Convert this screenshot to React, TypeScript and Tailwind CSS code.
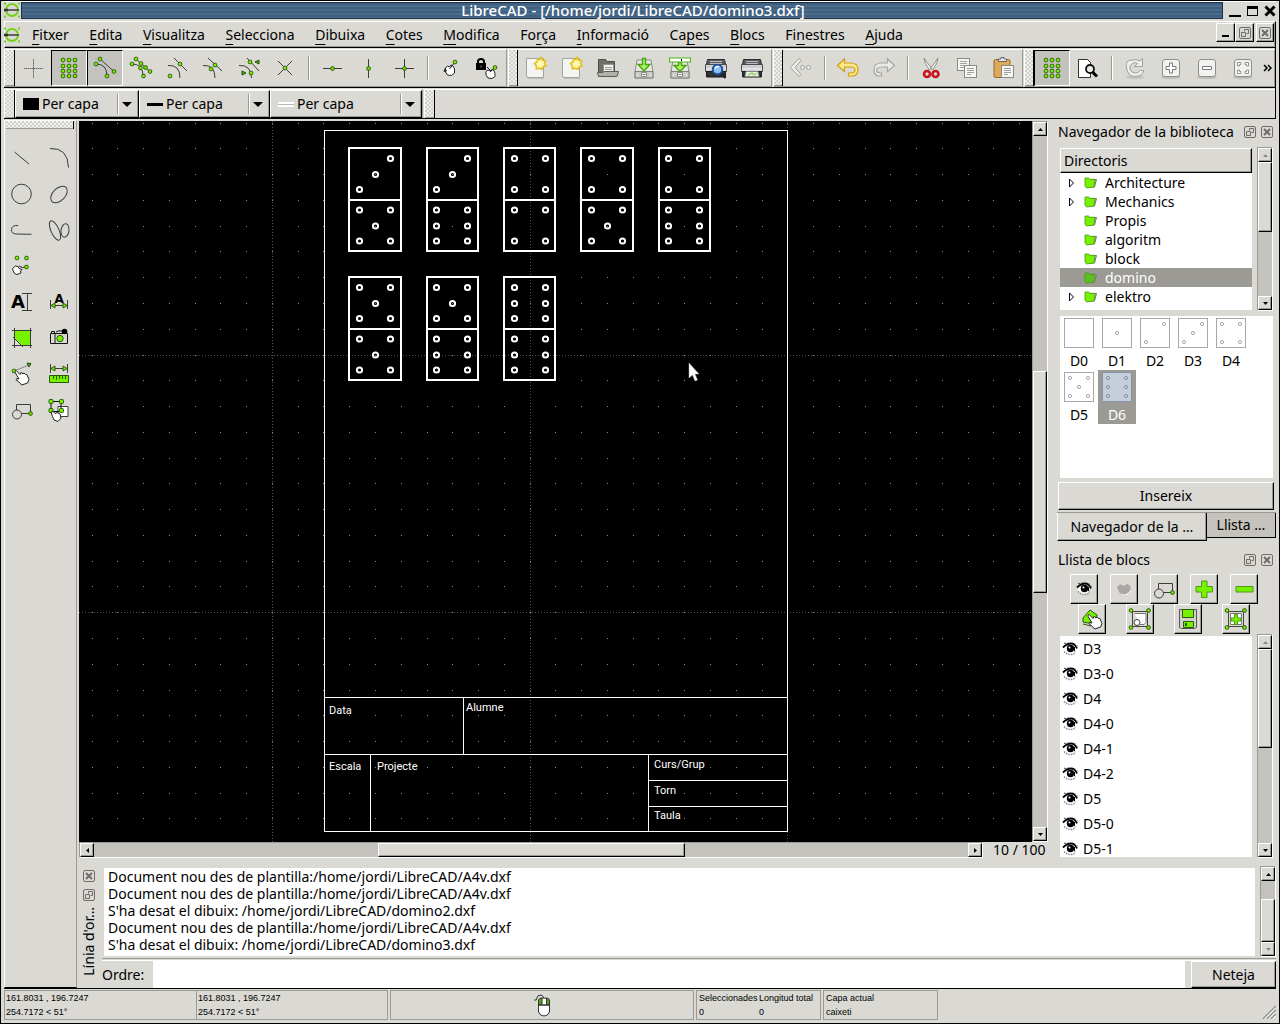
import React from "react";

const RAISED =
  "border border-t-white border-l-white border-r-black border-b-black bg-[#dad9d4] shadow-[inset_-1px_-1px_0_#9b9a94]";

type Pt = [number, number];

/* ---------- icon primitives ---------- */

function Icon({ children, size = 24 }: { children: React.ReactNode; size?: number }) {
  return (
    <svg
      width={size}
      height={size}
      viewBox={`0 0 ${size} ${size}`}
      fill="none"
      stroke="#3c3c3a"
      strokeWidth="1"
      className="block shrink-0"
      aria-hidden="true"
    >
      {children}
    </svg>
  );
}

function Dots({ at, r = 1.7 }: { at: Pt[]; r?: number }) {
  return (
    <g fill="#76f200" stroke="#2d5a08">
      {at.map(([x, y], i) => (
        <rect key={i} x={x - r} y={y - r} width={r * 2} height={r * 2} rx="1" />
      ))}
    </g>
  );
}

function Hand({ x = 0, y = 0 }: { x?: number; y?: number }) {
  return (
    <path
      transform={`translate(${x} ${y})`}
      d="M1 1.200 2.400.600 6 4.600 6.600 2.800 8 2.600 8.800 4 10 3 11.400 4.400 12.800 4.400 15 9.400 13.600 13 7.600 15 5.600 12.600 2 9.800 2.600 8.600 5 9 1.200 2.600Z"
      fill="#fff"
      stroke="#222"
    />
  );
}

const GRID: Pt[] = [];
for (const x of [6, 12, 18]) for (const y of [4, 10, 15, 20]) GRID.push([x, y]);

const GridIcon = () => (
  <Icon>
    <Dots at={GRID} />
  </Icon>
);

const Drive = () => (
  <g>
    <path d="M5 4h14l2 12v6H3v-6Z" fill="#e6e6e2" stroke="#8c8c88" />
    <path d="M3 15.500h18v6.500H3Z" fill="#c9c9c5" stroke="#80807c" />
    <path d="M9.500 16.500h5v4h-5z" fill="#fff" stroke="#888" />
    <path d="M10.500 18.500h3" stroke="#666" />
    <path d="M5.500 18v2M18.500 18v2" stroke="#eee" />
  </g>
);

const Printer = () => (
  <g>
    <path d="M3.500 3.500h17l1 5H2.500Z" fill="#5a5c5e" stroke="#2a2c2e" />
    <path d="M6 5.500h12M6 7.500h12" stroke="#b8babc" />
    <path d="M1.500 8.500h21v7h-21Z" fill="#cfd1d1" stroke="#4a4c4e" />
    <path d="M2.500 15.500h19v5.500h-19Z" fill="#2f3133" stroke="#1c1d1e" />
    <path d="M2 13h20" stroke="#f4f4f4" />
  </g>
);

const Paper = ({ x, y }: { x: number; y: number }) => (
  <g transform={`translate(${x} ${y})`}>
    <rect x=".5" y=".5" width="12" height="12" fill="#f6f6f4" stroke="#8a8a86" />
    <path d="M3 3.500h7M3 5.500h7M3 7.500h7M3 9.500h4" stroke="#a0a09c" />
  </g>
);

const ZoomPad = ({ children }: { children: React.ReactNode }) => (
  <Icon>
    <ellipse cx="12" cy="21" rx="10" ry="2" fill="#bdbcb7" stroke="none" />
    <rect x="3.500" y="3.500" width="17" height="17" rx="2.500" fill="#f2f2f0" stroke="#8e8e8a" />
    {children}
  </Icon>
);

const NewDoc = () => (
  <Icon>
    <path d="M2.500 2.500h17v19h-15q-2 0-2-2Z" fill="#f4f4f2" stroke="#a2a29e" />
    <path d="M4 22.500h16" stroke="#c0bfba" />
    <path
      d="m17 1.500 1.500 2.700 3 .5-1 2.800 1.500 2.500-2.800.800-1.400 2.400-2.600-1-2.800.500-.100-2.900-1.800-2.300 2.500-1.500.700-2.800 2.500.3Z"
      fill="#fff8b4"
      stroke="#e6c01e"
      strokeWidth="1.600"
    />
  </Icon>
);

const Eye = ({ dim = false }: { dim?: boolean }) => (
  <svg width="16" height="14" viewBox="0 0 16 14" fill="none" className="block shrink-0" aria-hidden="true">
    {dim ? (
      <>
        <path d="M2 10q3 3 7 3t6-4V6l-1 3-4 3H5Z" fill="#fff" />
        <path d="M1 5 4 2.500 6 3l2 1 3-2 3 1.500 1 3-2 4-4 2-5-1L2 8Z" fill="#a9a8a4" />
      </>
    ) : (
      <g>
        <path d="M1 8.500 4 5l5-2 5 3-1 4-4 2.500-5-1Z" fill="#fff" />
        <path d="M1 5.500Q5 1.500 9 1.500t6 5" stroke="#000" strokeWidth="1.800" />
        <path d="M4 2 2 1M7 1.500 6 .5M12 2.500 13 1.500M14 5l1.500-1" stroke="#333" />
        <path d="M2 9.500Q5 12.500 9 12.500t4-3" stroke="#8a8a8a" strokeWidth="1.500" strokeDasharray="1.500 1" />
        <circle cx="8.500" cy="6.500" r="3.700" fill="#000" />
        <circle cx="7.500" cy="5.500" r="1" fill="#fff" />
        <path d="M12.500 5v4" stroke="#000" />
      </g>
    )}
  </svg>
);

const Folder = ({ dark = false }: { dark?: boolean }) => (
  <svg width="14" height="12" viewBox="0 0 14 12" className="block shrink-0" aria-hidden="true">
    <path d="M4 2.500h8.500l-2 7.500H4Z" fill="#b9b8c4" stroke="#77767c" />
    <path d="M1 1h3.500l1.500 1.300h5l-1 7.700-7.500 1L1 9Z" fill={dark ? "#5bc022" : "#76f200"} stroke="#4a9a10" strokeWidth=".8" />
  </svg>
);

const BlockShape = () => (
  <>
    <path d="M6.500 12V6.500h14v9H11" />
    <circle cx="7" cy="16.500" r="4.500" />
    <Dots at={[[20.5, 15.5]]} />
  </>
);

const Logo = () => (
  <svg width="16" height="16" viewBox="0 0 16 16" fill="none" className="block shrink-0" aria-hidden="true">
    <path d="M0 1.500h2M14 1.500h2M0 14.500h2M14 14.500h2" stroke="#74d216" strokeWidth="2" />
    <circle cx="8" cy="8" r="6" stroke="#74d216" strokeWidth="1.800" />
    <path d="M0 8h15" stroke="#444" strokeWidth="1.600" />
    <path d="M0 8h4" stroke="#333" strokeWidth="2.600" />
  </svg>
);

/* ---------- tool definitions ---------- */

type Tool = { label: string; icon: React.ReactNode; pressed?: boolean } | "sep";

const SNAP: Tool[] = [
  { label: "Captura lliure", icon: <Icon><path d="M3 12.500h19M12.500 3v19" stroke="#666" strokeDasharray="1.500 .5" /></Icon> },
  { label: "Captura a la graella", pressed: true, icon: <GridIcon /> },
  {
    label: "Captura als extrems",
    pressed: true,
    icon: <Icon><path d="M7 3 21 15.500M3 8q11 0 11 12" /><Dots at={[[7, 3], [3, 8], [14, 20], [21, 15.5]]} /></Icon>,
  },
  {
    label: "Captura a l'entitat",
    icon: <Icon><path d="M7 3 21 15.500M3 8q11 0 11 12" /><Dots at={[[7, 3], [3, 8], [12, 7.5], [11.5, 12], [16.5, 11.5], [21, 15.5], [14.5, 20]]} /></Icon>,
  },
  { label: "Captura al centre", icon: <Icon><path d="M9 2 22 15M3 9.500q12-1 12 12.500" /><Dots at={[[15, 8], [5, 20]]} /></Icon> },
  { label: "Captura al punt mig", icon: <Icon><path d="M7 2 21 15M2 9.500q12-1 12 12.500" /><Dots at={[[14, 9], [10, 13]]} /></Icon> },
  {
    label: "Captura a distància",
    icon: (
      <Icon>
        <path d="M10 2 22 15M2 9.500q12-1 12.500 12.500" />
        <path d="M22 4v4l-4-2ZM5 15v4l4-2Z" fill="#4fae0c" stroke="#22500a" />
        <Dots at={[[13, 6], [14, 17]]} />
      </Icon>
    ),
  },
  { label: "Captura a la intersecció", icon: <Icon><path d="m5 5 14 14M19 5 5 19" /><Dots at={[[12, 12]]} /></Icon> },
  "sep",
  { label: "Restringeix horitzontal", icon: <Icon><path d="M3 12.500h19" /><Dots at={[[12.5, 12.5]]} /></Icon> },
  { label: "Restringeix vertical", icon: <Icon><path d="M12.500 3v19" /><Dots at={[[12.5, 12.5]]} /></Icon> },
  { label: "Restringeix ortogonal", icon: <Icon><path d="M3 12.500h19M12.500 3v19" /><Dots at={[[12.5, 12.5]]} /></Icon> },
  "sep",
  {
    label: "Estableix el zero relatiu",
    icon: (
      <Icon>
        <path d="m6.500 12 2-2 2 1 1.500-2 2 1 1.500 3v4l-3 2.500-4-.5-2-3Z" fill="#fff" stroke="#222" />
        <path d="m10.500 13 5.500-7M6 12.500l-1 3 3-1" stroke="#222" />
        <Dots at={[[16, 6]]} />
      </Icon>
    ),
  },
  {
    label: "Bloca el zero relatiu",
    icon: (
      <Icon>
        <path d="M3 8V5.500Q3 3 6 3t3 2.500V8" stroke="#000" strokeWidth="2" />
        <rect x="1" y="7" width="10" height="7" fill="#000" stroke="none" />
        <path d="M6 9.500v2" stroke="#888" />
        <path d="m11 15.500 2-1.500 2 1 2-1.500 2 1 1 3v3L17 22.500l-4-.5-2-3Z" fill="#fff" stroke="#222" />
        <path d="m12 11 4 4M15 16l4.500-4" stroke="#222" />
        <Dots at={[[20, 11.5]]} />
      </Icon>
    ),
  },
];

const FILES: Tool[] = [
  { label: "Nou", icon: <NewDoc /> },
  { label: "Nou des de plantilla", icon: <NewDoc /> },
  {
    label: "Obre",
    icon: (
      <Icon>
        <path d="M2.500 3.500h7l2 2h7v14h-16Z" fill="#6f7068" stroke="#4c4d47" />
        <path d="M7.500 8.500h10v9h-10Z" fill="#f2f2f0" stroke="#96968f" />
        <path d="M9 11.500h7M9 13.500h7" stroke="#999" />
        <path d="M2.500 20.500 1.500 16.500h5l2-1h14l-1.500 5Z" fill="#b0b1a8" stroke="#5c5d57" />
      </Icon>
    ),
  },
  {
    label: "Desa",
    icon: <Icon><Drive /><path d="M10.500 2.500h3v6H18l-6 6.500-6-6.500h4.500Z" fill="#aaf06a" stroke="#45a50a" strokeWidth="1.300" /></Icon>,
  },
  {
    label: "Anomena i desa",
    icon: (
      <Icon>
        <Drive />
        <path d="M10.500 6.500h3v3H18l-6 6-6-6h4.500Z" fill="#aaf06a" stroke="#45a50a" strokeWidth="1.300" />
        <rect x="1.500" y="2" width="21" height="4" fill="#fff" stroke="#4fb50e" />
        <path d="M13.500 3v2" stroke="#000" />
      </Icon>
    ),
  },
  {
    label: "Previsualització d'impressió",
    icon: (
      <Icon>
        <Printer />
        <path d="m17 17 4.500 5" stroke="#222" strokeWidth="2.500" />
        <circle cx="13.500" cy="13.500" r="4.800" fill="#8ec0f4" stroke="#1d4f9c" strokeWidth="2" />
        <path d="M11 12q1.500-2 4-1.500" stroke="#fff" strokeWidth="1.500" />
      </Icon>
    ),
  },
  {
    label: "Imprimeix",
    icon: (
      <Icon>
        <Printer />
        <path d="M6 15.500h12l1 5H5Z" fill="#f4f6f2" stroke="#888" />
        <path d="m8 19 4-2 2 2 3-2" stroke="#8fd45e" strokeWidth="1.500" />
      </Icon>
    ),
  },
];

const EDIT: Tool[] = [
  {
    label: "Tanca",
    icon: (
      <Icon>
        <path d="m12 4.500-2-2L1.500 11.500l8.500 9 2-2-6-7Z" fill="#eeeeea" stroke="#9e9e9a" />
        <circle cx="13.500" cy="11.500" r="2" fill="#eee" stroke="#9e9e9a" />
        <circle cx="19.500" cy="11.500" r="2" fill="#eee" stroke="#9e9e9a" />
      </Icon>
    ),
  },
  "sep",
  {
    label: "Desfés",
    icon: <Icon><path d="m1.500 9.500 7-6.500v4h6q7.500 0 7.500 6.500T15.500 20h-3v-3h2q4.500 0 4.500-3t-4.500-3h-6v4.500Z" fill="#fbe98a" stroke="#cfa010" strokeWidth="1.200" /></Icon>,
  },
  {
    label: "Refés",
    icon: <Icon><path d="m22.500 9.500-7-6.500v4h-6Q2 7 2 13.500T7.500 20h2v-3H8q-3.500-.5-3.500-3T9.500 11h6v4.500Z" fill="#e9e9e5" stroke="#a6a6a2" strokeWidth="1.200" /></Icon>,
  },
  "sep",
  {
    label: "Retalla",
    icon: (
      <Icon>
        <path d="M5 2q0 5 5.500 12l2-2Q8 7 5 2ZM19 2q0 5-5.500 12l-2-2Q16 7 19 2Z" fill="#f4f4f2" stroke="#8c8c88" />
        <circle cx="8" cy="18" r="3" stroke="#c8141c" strokeWidth="2.600" />
        <circle cx="16.500" cy="18" r="3" stroke="#c8141c" strokeWidth="2.600" />
      </Icon>
    ),
  },
  { label: "Copia", icon: <Icon><Paper x={2} y={2} /><Paper x={9} y={9} /></Icon> },
  {
    label: "Enganxa",
    icon: (
      <Icon>
        <rect x="3" y="3.500" width="16" height="18" rx="1.500" fill="#e0a858" stroke="#96682a" />
        <path d="M7.500 5.500V3h2.500V1.500h3V3h2.500v2.500Z" fill="#e8e8e6" stroke="#666" />
        <Paper x={10} y={9} />
      </Icon>
    ),
  },
];

const VIEW: Tool[] = [
  { label: "Graella", pressed: true, icon: <GridIcon /> },
  {
    label: "Esborrany",
    icon: (
      <Icon>
        <path d="M2.500 3.500h9l3 3v15h-12Z" fill="#fff" stroke="#333" />
        <circle cx="14" cy="13" r="4" fill="#ecece8" stroke="#111" strokeWidth="1.800" />
        <path d="m16.500 16 4.500 4.500" stroke="#000" strokeWidth="3" />
      </Icon>
    ),
  },
  "sep",
  {
    label: "Redibuixa",
    icon: (
      <Icon>
        <ellipse cx="12" cy="21" rx="9" ry="2" fill="#c4c3be" stroke="none" />
        <path d="M19.500 2.500v8h-8l3-3q-2-1.500-4.500-.5-4 2-3 6t5.500 4q3 0 4.500-2.500h4Q19 20.500 12 20.500T3.500 12 9 4.200q4-1.700 8 .8Z" fill="#eeeeea" stroke="#a0a09c" />
      </Icon>
    ),
  },
  { label: "Amplia", icon: <ZoomPad><path d="M10.500 7h3v3.500H17v3h-3.500V17h-3v-3.500H7v-3h3.500Z" fill="#fff" stroke="#777" /></ZoomPad> },
  { label: "Redueix", icon: <ZoomPad><path d="M7.500 10.500h9v3h-9Z" fill="#fff" stroke="#777" /></ZoomPad> },
  {
    label: "Zoom automàtic",
    icon: (
      <ZoomPad>
        <path d="M6.500 10V6.500H10v2H8.500V10ZM14 6.500h3.500V10h-2V8.500H14ZM6.500 14v3.500H10v-2H8.500V14ZM17.500 14v3.500H14v-2h1.500V14Z" fill="#fff" stroke="#777" strokeWidth=".8" />
      </ZoomPad>
    ),
  },
];

const DRAW: ({ label: string; icon: React.ReactNode } | null)[] = [
  { label: "Línies", icon: <Icon><path d="m4.500 6 14.500 12" /></Icon> },
  { label: "Arcs", icon: <Icon><path d="M3 2.500q18-1 18.500 19" /></Icon> },
  { label: "Cercles", icon: <Icon><circle cx="11.500" cy="12" r="9.800" /></Icon> },
  { label: "El·lipses", icon: <Icon><ellipse cx="12" cy="12.500" rx="10" ry="6.200" transform="rotate(-45 12 12.500)" /></Icon> },
  { label: "Polilínies", icon: <Icon><path d="M8 7.500q-6-.5-6.500 4T7 16l14.500.3" /></Icon> },
  {
    label: "Splines",
    icon: (
      <Icon>
        <ellipse cx="8" cy="12.500" rx="4" ry="10.500" transform="rotate(-24 8 12.500)" />
        <ellipse cx="18" cy="12.500" rx="4" ry="6.800" transform="rotate(8 18 12.500)" />
      </Icon>
    ),
  },
  {
    label: "Punts",
    icon: (
      <Icon>
        <path d="M9 12q3 2.500 7 1" stroke="#222" />
        <path d="m2.500 14.500 3-2.500 2.500.5 1 2 3 1-1.500 1.500.5 2-4 1.500-2.500-1-1.500-3Z" fill="#fff" stroke="#222" />
        <Dots at={[[7, 4], [16.5, 4], [16.5, 13]]} />
      </Icon>
    ),
  },
  null,
  {
    label: "Text",
    icon: (
      <Icon>
        <text x="1" y="18" fontSize="18" fontWeight="700" fontFamily="'DejaVu Sans', sans-serif" fill="#000" stroke="none">A</text>
        <path d="M12 3.500h10M12 20.500h10M17.500 4v16" />
      </Icon>
    ),
  },
  {
    label: "Cotes",
    icon: (
      <Icon>
        <text x="7.500" y="13" fontSize="12" fontWeight="700" fontFamily="'DejaVu Sans', sans-serif" fill="#000" stroke="none">A</text>
        <path d="M3.500 10v9M20.500 10v9M4 15.500h16" />
        <path d="m4 15.500 4-2.500v5ZM20 15.500 16 13v5Z" fill="#76f200" stroke="#2d5a08" />
      </Icon>
    ),
  },
  { label: "Ombreig", icon: <Icon><path d="M5 4.500h15v15h-8L5 12Z" fill="#76f200" stroke="none" /><path d="M2 4.500h20M20.500 2v20M4.500 2v20M2 19.500h20M3 11l10 10" /></Icon> },
  {
    label: "Imatge",
    icon: (
      <Icon>
        <path d="M3.500 7.500h17v10h-17ZM8 7.500v10M4.500 7V5.500h3V7" stroke="#111" />
        <path d="M9 6q3-2 6-1" stroke="#111" />
        <circle cx="17.500" cy="5.500" r="2.800" fill="#000" stroke="none" />
        <circle cx="13" cy="12.500" r="3.200" fill="#76f200" stroke="#2d5a08" />
      </Icon>
    ),
  },
  {
    label: "Modifica",
    icon: (
      <Icon>
        <path d="M4 9 19 3" stroke="#888" />
        <Dots at={[[4, 9]]} />
        <path d="m17 1 4 .5-2 3.500Z" fill="#4fae0c" stroke="#22500a" />
        <Hand x={4} y={8} />
      </Icon>
    ),
  },
  {
    label: "Mesura",
    icon: (
      <Icon>
        <path d="M3.500 2v9M20.500 2v9M4 6.500h16" />
        <path d="M4 6.500 8 4v5ZM20 6.500 16 4v5Z" fill="#76f200" stroke="#2d5a08" />
        <path d="M2.500 13.500h19v7h-19Z" fill="#76f200" stroke="#2d5a08" />
        <path d="M6.500 14v3M9.500 14v4M12.500 14v3M15.500 14v3M18.500 14v3" stroke="#2d5a08" />
      </Icon>
    ),
  },
  { label: "Blocs", icon: <Icon><BlockShape /></Icon> },
  {
    label: "Selecciona",
    icon: (
      <Icon>
        <path d="M11 8.500h10v10H11Z" fill="#fff" />
        <path d="M4 3.500h10v10H4Z" stroke="#111" />
        <Dots at={[[4, 3.5], [14.5, 3.5], [4, 12.5], [14.5, 12.5]]} r={2} />
        <path d="m4 14 2-.5 2 2 2-1 3 1.500 1 4-3 3.500-4-1.500-1.500-3.500Z" fill="#fff" stroke="#222" />
      </Icon>
    ),
  },
];

const FRAME_CORNERS: Pt[] = [[3, 3.5], [20.5, 3.5], [3, 20.5], [20.5, 20.5]];

const BLOCK_ACTIONS_A = [
  { label: "Mostra tots els blocs", icon: <Eye /> },
  { label: "Amaga tots els blocs", icon: <Eye dim /> },
  { label: "Crea un bloc", icon: <Icon><BlockShape /></Icon> },
  { label: "Afegeix un bloc", icon: <Icon><path d="M9.500 4h5.500v5.500h5.500v5.500H15v5.500H9.500V15H4V9.500h5.500Z" fill="#76f200" stroke="#4f9a1a" /></Icon> },
  { label: "Elimina el bloc", icon: <Icon><path d="M4 9.500h17v5.500H4Z" fill="#76f200" stroke="#4f9a1a" /></Icon> },
];

const BLOCK_ACTIONS_B = [
  {
    label: "Reanomena el bloc",
    icon: (
      <Icon>
        <path d="m3 11 7-8 7 5-1 6-8 2-5-1Z" fill="#76f200" stroke="#2d5a08" />
        <path d="m3 17 8 2" stroke="#2d5a08" />
        <Hand x={7} y={7} />
      </Icon>
    ),
  },
  {
    label: "Edita el bloc",
    icon: (
      <Icon>
        <path d="M4.500 4.500h15v15h-15Z" stroke="#444" />
        <path d="M6.500 6.500h11.500v9l-2 2h-4" fill="#fff" stroke="#777" />
        <circle cx="9" cy="15.500" r="3" fill="#fff" />
        <Dots at={FRAME_CORNERS} r={1.7} />
      </Icon>
    ),
  },
  {
    label: "Desa el bloc",
    icon: (
      <Icon>
        <path d="M3.500 2.500h17v18l-2 1h-13l-2-1Z" fill="#d2d1cc" stroke="#555" />
        <path d="M6.500 2.500h11v8h-11Z" fill="#76f200" stroke="#2d5a08" />
        <path d="M7.500 14.500h10v6h-10Z" fill="#76f200" stroke="#2d5a08" />
        <path d="M10 16v3" stroke="#2d5a08" strokeWidth="2" />
      </Icon>
    ),
  },
  {
    label: "Insereix el bloc",
    icon: (
      <Icon>
        <path d="M4.500 4.500h15v15h-15Z" stroke="#444" />
        <path d="M6.500 6.500h11v11h-11Z" fill="#fff" stroke="#777" />
        <path d="M10.500 7.500h3v3.500H17v3h-3.500v3.500h-3V14H7v-3h3.500Z" fill="#76f200" stroke="#4f9a1a" />
        <Dots at={FRAME_CORNERS} r={1.7} />
      </Icon>
    ),
  },
];

/* ---------- chrome ---------- */

function Grip({ className = "w-2" }: { className?: string }) {
  return (
    <div
      className={`${className} shrink-0 border-b border-[#9b9a94] bg-[repeating-conic-gradient(#eeede9_0_25%,#d2d1cb_0_50%)] bg-[length:4px_4px]`}
    />
  );
}

function ToolGroup({ tools, label, grip = "w-2", more = false }: { tools: Tool[]; label: string; grip?: string; more?: boolean }) {
  return (
    <div
      role="toolbar"
      aria-label={label}
      className={`flex border border-t-white border-l-white border-r-[#9b9a94] border-b-[#9b9a94] pr-px ${more ? "grow" : ""}`}
    >
      <Grip className={grip} />
      <div className="w-px shrink-0 bg-black" />
      {tools.map((t, i) =>
        t === "sep" ? (
          <div key={i} className="flex w-[11px] shrink-0 items-center justify-center">
            <div className="h-6 w-[2px] border-r border-white bg-[#9b9a94]" />
          </div>
        ) : (
          <button
            key={i}
            type="button"
            aria-label={t.label}
            aria-pressed={t.pressed}
            className={`flex h-9 w-9 shrink-0 items-center justify-center ${
              t.pressed ? "border border-t-black border-l-black border-r-white border-b-white bg-[#c3c2bc]" : ""
            }`}
          >
            {t.icon}
          </button>
        )
      )}
      {more && (
        <button type="button" aria-label="Més eines" className="w-3 shrink-0">
          <svg width="10" height="8" viewBox="0 0 10 8" fill="none" stroke="#000" strokeWidth="1.500" className="ml-0.5">
            <path d="m1 1 3 3-3 3M5 1l3 3-3 3" />
          </svg>
        </button>
      )}
    </div>
  );
}

function Combo({ label, width, swatch }: { label: string; width: string; swatch: React.ReactNode }) {
  return (
    <div className={`relative flex h-7 items-center ${RAISED} ${width}`}>
      <span className="pointer-events-none absolute left-[7px]">{swatch}</span>
      <select aria-label={label} className="h-full w-full appearance-none bg-transparent pr-6 pl-[26px] text-sm outline-none">
        <option>Per capa</option>
      </select>
      <span className="pointer-events-none absolute right-1.5 flex items-center gap-[3px]">
        <span className="h-5 w-[2px] border-r border-white bg-[#9b9a94]" />
        <svg width="10" height="5" viewBox="0 0 10 5"><path d="M0 0h10L5 5Z" /></svg>
      </span>
    </div>
  );
}

type Dir = "up" | "down" | "left" | "right";
const ARROWS: Record<Dir, string> = {
  up: "M0 4h5L2.500 1Z",
  down: "M0 1h5L2.500 4Z",
  left: "M4 0v5L1 2.500Z",
  right: "M1 0v5l3-2.500Z",
};

function ScrollArrow({ dir, dim }: { dir: Dir; dim?: boolean }) {
  return (
    <button type="button" aria-label={`Desplaça ${dir}`} className={`flex h-3.5 w-3.5 shrink-0 items-center justify-center ${RAISED}`}>
      <svg width="5" height="5" viewBox="0 0 5 5" fill={dim ? "#8a8984" : "#000"}><path d={ARROWS[dir]} /></svg>
    </button>
  );
}

function ScrollBar({
  before, thumb, after, horizontal = false, dimStart, dimEnd, className = "",
}: {
  before: number; thumb: number; after: number; horizontal?: boolean; dimStart?: boolean; dimEnd?: boolean; className?: string;
}) {
  return (
    <div
      className={`flex shrink-0 border border-t-[#9b9a94] border-l-[#9b9a94] border-r-white border-b-white bg-[#c3c2bc] ${
        horizontal ? "h-4 flex-row" : "w-4 flex-col"
      } ${className}`}
    >
      <ScrollArrow dir={horizontal ? "left" : "up"} dim={dimStart} />
      <div style={{ flexGrow: before }} />
      <div className={RAISED} style={{ flexGrow: thumb }} />
      <div style={{ flexGrow: after }} />
      <ScrollArrow dir={horizontal ? "right" : "down"} dim={dimEnd} />
    </div>
  );
}

const FloatGlyph = () => (
  <svg width="12" height="12" viewBox="0 0 12 12" fill="none" stroke="#6e6d69" className="block">
    <rect x=".5" y=".5" width="11" height="11" rx="1.500" />
    <path d="M5.500 4.500v-2h4v4h-2M2.500 5.500h4v4h-4Z" />
  </svg>
);
const CloseGlyph = () => (
  <svg width="12" height="12" viewBox="0 0 12 12" fill="none" stroke="#6e6d69" className="block">
    <rect x=".5" y=".5" width="11" height="11" rx="1.500" />
    <path d="m3 3 6 6M9 3 3 9" strokeWidth="2" />
  </svg>
);

function DockTitle({ title }: { title: string }) {
  return (
    <div className="flex h-5 items-center">
      <h2 className="grow text-sm whitespace-nowrap">{title}</h2>
      <button type="button" aria-label="Desacobla"><FloatGlyph /></button>
      <button type="button" aria-label="Tanca" className="mr-[3px] ml-[5px]"><CloseGlyph /></button>
    </div>
  );
}

/* ---------- drawing ---------- */

const UNIT = 25.77;
const OX = 193.4;
const OY = 234;

const PIPS: Record<number, Pt[]> = {
  1: [[26, 26]],
  2: [[41, 10], [10, 41]],
  3: [[41, 10], [26, 26], [10, 41]],
  4: [[10, 10], [41, 10], [10, 41], [41, 41]],
  5: [[10, 10], [41, 10], [26, 26], [10, 41], [41, 41]],
  6: [[10, 10], [41, 10], [10, 26], [41, 26], [10, 41], [41, 41]],
};

/* x and y: outline origin; w: outline width; inset: x of the pips' own origin */
const DOMINOES: { x: number; y: number; w: number; inset: number; top: number; bottom: number }[] = [
  { x: 270, y: 27, w: 52, inset: 0, top: 3, bottom: 5 },
  { x: 348, y: 27, w: 51, inset: -1, top: 3, bottom: 6 },
  { x: 425, y: 27, w: 51, inset: 0, top: 4, bottom: 4 },
  { x: 502, y: 27, w: 52, inset: 0, top: 4, bottom: 5 },
  { x: 580, y: 27, w: 51, inset: -1, top: 4, bottom: 6 },
  { x: 270, y: 156, w: 52, inset: 0, top: 5, bottom: 5 },
  { x: 348, y: 156, w: 51, inset: -1, top: 5, bottom: 6 },
  { x: 425, y: 156, w: 51, inset: 0, top: 6, bottom: 6 },
];

const LABELS: [string, number, number][] = [
  ["Data", 250, 593],
  ["Alumne", 387, 590],
  ["Escala", 250, 649],
  ["Projecte", 298, 649],
  ["Curs/Grup", 575, 647],
  ["Torn", 575, 673],
  ["Taula", 575, 698],
];

function Drawing() {
  let dots = "";
  for (let i = -7; i < 90; i++)
    for (let j = -9; j < 60; j++)
      dots += `M${Math.floor(OX + i * UNIT)} ${Math.floor(OY + j * UNIT)}h1v1h-1z`;
  const meta = [0, 1, 2, 3, 4, 5, 6, 7];
  return (
    <svg className="absolute inset-0 h-full w-full bg-black" role="img" aria-label="Dibuix domino3.dxf">
      <path d={dots} fill="#8a8a8a" />
      {meta.map((k) => (
        <g key={k} stroke="#505050" strokeDasharray="1 2" shapeRendering="crispEdges">
          <line x1={Math.floor(OX + k * 10 * UNIT) + 0.5} x2={Math.floor(OX + k * 10 * UNIT) + 0.5} y1="0" y2="100%" />
          <line y1={Math.floor(OY + k * 10 * UNIT) + 0.5} y2={Math.floor(OY + k * 10 * UNIT) + 0.5} x1="0" x2="100%" />
        </g>
      ))}
      <path
        d="M245.500 9.500h463v701h-463ZM245.500 576.500h463M384.500 576.500v57M245.500 633.500h463M291.500 633.500v77M569.500 633.500v77M569.500 659.500h139M569.500 685.500h139"
        fill="none"
        stroke="#fff"
        shapeRendering="crispEdges"
      />
      {DOMINOES.map((d, i) => (
        <g key={i} fill="none" stroke="#fff" strokeWidth="2" transform={`translate(${d.x} ${d.y})`}>
          <path d={`M0 0h${d.w}v103H0ZM0 52h${d.w}`} shapeRendering="crispEdges" />
          {PIPS[d.top].map(([x, y], k) => <circle key={`t${k}`} cx={x + 0.5 + d.inset} cy={y + 0.5} r="2.600" />)}
          {PIPS[d.bottom].map(([x, y], k) => <circle key={`b${k}`} cx={x + 0.5 + d.inset} cy={y + 52} r="2.600" />)}
        </g>
      ))}
      {LABELS.map(([t, x, y]) => (
        <text key={t} x={x} y={y} fill="#fff" fontSize="11" fontFamily="Roboto, 'Liberation Sans', sans-serif">{t}</text>
      ))}
      <path d="M610 242v15l3.500-3 2.500 6 2.500-1-2.500-6h4Z" fill="#fff" stroke="#aaa" strokeWidth=".5" />
    </svg>
  );
}

/* ---------- page data ---------- */

const MENUS: [string, string, string][] = [
  ["", "F", "itxer"],
  ["", "E", "dita"],
  ["", "V", "isualitza"],
  ["", "S", "elecciona"],
  ["", "D", "ibuixa"],
  ["", "C", "otes"],
  ["", "M", "odifica"],
  ["Fo", "r", "ça"],
  ["", "I", "nformació"],
  ["Ca", "p", "es"],
  ["", "B", "locs"],
  ["Fi", "n", "estres"],
  ["", "A", "juda"],
];

const DIRS: [string, boolean][] = [
  ["Architecture", true],
  ["Mechanics", true],
  ["Propis", false],
  ["algoritm", false],
  ["block", false],
  ["domino", false],
  ["elektro", true],
];

const BLOCKS = ["D3", "D3-0", "D4", "D4-0", "D4-1", "D4-2", "D5", "D5-0", "D5-1"];

const LOG = [
  "Document nou des de plantilla:/home/jordi/LibreCAD/A4v.dxf",
  "Document nou des de plantilla:/home/jordi/LibreCAD/A4v.dxf",
  "S'ha desat el dibuix: /home/jordi/LibreCAD/domino2.dxf",
  "Document nou des de plantilla:/home/jordi/LibreCAD/A4v.dxf",
  "S'ha desat el dibuix: /home/jordi/LibreCAD/domino3.dxf",
];

function Tile({ n }: { n: number }) {
  const on = n === 6;
  return (
    <button type="button" className={`flex h-[54px] w-[38px] flex-col items-center pt-0.5 ${on ? "bg-[#9b9a94] text-white" : ""}`}>
      <svg width="30" height="30" viewBox="0 0 30 30" className="block shrink-0" fill={on ? "#c5cfdc" : "#fff"} stroke={on ? "#8594a8" : "#a8a8a8"}>
        <rect x=".5" y=".5" width="29" height="29" />
        {(PIPS[n] ?? []).map(([x, y], i) => (
          <circle key={i} cx={Math.round(x * 0.58)} cy={Math.round(y * 0.58)} r="1.600" />
        ))}
      </svg>
      <span className="mt-[3px] text-sm leading-5">D{n}</span>
    </button>
  );
}

function StatusCell({ lines, className }: { lines: string[]; className: string }) {
  return (
    <div className={`text-[9px] leading-[14px] whitespace-nowrap ${className}`}>
      {lines.map((l, i) => <div key={i}>{l}</div>)}
    </div>
  );
}

/* ---------- page ---------- */

export default function App() {
  return (
    <div className="flex h-screen flex-col overflow-hidden border border-black bg-[#dad9d4] px-[3px] font-['Noto_Sans','Open_Sans',sans-serif] text-sm text-black">
      <header className="flex h-5 shrink-0 items-start border-t border-white">
        <Logo />
        <h1 className="ml-px flex h-[17px] grow items-center justify-center border border-[#1d2f42] bg-[repeating-linear-gradient(#3f5f80_0_2px,#4c6c8c_2px_4px)] pl-[22px] text-[15px] leading-none font-medium text-white">
          LibreCAD - [/home/jordi/LibreCAD/domino3.dxf]
        </h1>
        <div className="flex h-[18px] items-center gap-1.5 pl-1.5">
          <button type="button" aria-label="Minimitza" className="flex h-3 w-3 items-end"><span className="h-0.5 w-3 bg-black" /></button>
          <button type="button" aria-label="Maximitza" className="h-2.5 w-[11px] border border-t-[3px] border-black" />
          <button type="button" aria-label="Tanca la finestra">
            <svg width="12" height="12" viewBox="0 0 12 12" fill="none" stroke="#000" strokeWidth="3" className="block"><path d="m1.500 1.500 9 9M10.500 1.500l-9 9" /></svg>
          </button>
        </div>
      </header>

      <nav aria-label="Menú principal" className="flex h-[27px] shrink-0 items-center border border-t-white border-l-white border-r-black border-b-black shadow-[inset_-1px_-1px_0_#9b9a94]">
        <span className="-ml-px"><Logo /></span>
        <div className="mr-auto ml-3 flex w-[871px] justify-between">
          {MENUS.map(([a, u, b]) => (
            <button key={a + u + b} type="button" className="leading-6">
              {a}
              <span className="underline underline-offset-4">{u}</span>
              {b}
            </button>
          ))}
        </div>
        <div className="mr-px mb-1 flex">
          <button type="button" aria-label="Minimitza el document" className={`flex h-[19px] w-[19px] items-end justify-center pb-1 ${RAISED}`}><span className="h-0.5 w-[7px] bg-black" /></button>
          <button type="button" aria-label="Restaura el document" className={`mr-0.5 flex h-[19px] w-[19px] items-center justify-center ${RAISED}`}><FloatGlyph /></button>
          <button type="button" aria-label="Tanca el document" className={`flex h-[19px] w-[18px] items-center justify-center ${RAISED}`}><CloseGlyph /></button>
        </div>
      </nav>

      <div className="flex h-10 shrink-0 border-r border-b border-black pt-px">
        <div className="flex pr-px"><ToolGroup tools={SNAP} label="Captura" grip="w-[9px]" /></div>
        <div className="flex pr-px"><ToolGroup tools={FILES} label="Fitxer" /></div>
        <div className="flex pr-px"><ToolGroup tools={EDIT} label="Edita" /></div>
        <div className="flex grow"><ToolGroup tools={VIEW} label="Visualitza" more /></div>
      </div>

      <div className="flex h-[31px] shrink-0 border-r border-b border-black pt-px">
        <div className="flex border-t border-r border-l border-white border-r-[#9b9a94]">
          <Grip className="w-[9px]" />
          <div className="w-px bg-black" />
          <Combo label="Color" width="w-[124px]" swatch={<span className="block h-3 w-4 bg-black" />} />
          <Combo label="Gruix" width="w-[131px]" swatch={<span className="block h-[3px] w-4 bg-black" />} />
          <Combo label="Tipus de línia" width="w-[152px]" swatch={<span className="block h-[5px] w-4 border-y-2 border-white bg-[#b8b7b2]" />} />
        </div>
        <div className="ml-px flex grow border-t border-l border-white">
          <Grip className="w-[9px]" />
          <div className="w-px bg-black" />
        </div>
      </div>

      <div className="flex min-h-0 grow pt-px">
        <aside aria-label="Eines de dibuix" className="w-[73px] shrink-0 border-t border-r border-b border-l border-t-white border-l-white border-r-[#9b9a94] border-b-black">
          <div className="flex h-2 pr-0.5 pl-px">
            <Grip className="grow" />
            <div className="w-px bg-black" />
          </div>
          <div className="mt-[11px] -ml-px grid grid-cols-[36px_37px]">
            {DRAW.map((t, i) =>
              t ? (
                <button key={i} type="button" aria-label={t.label} className="flex h-9 items-center justify-center">{t.icon}</button>
              ) : (
                <span key={i} />
              )
            )}
          </div>
        </aside>

        <div className="flex min-w-0 grow flex-col pl-0.5">
          <div className="flex min-h-0 grow">
            <main className="flex min-w-0 grow flex-col">
              <div className="flex min-h-0 grow pt-px">
                <div className="relative min-w-0 grow overflow-hidden"><Drawing /></div>
                <ScrollBar before={235} thumb={221} after={234} />
              </div>
              <div className="flex">
                <ScrollBar horizontal before={284} thumb={306} after={283} className="grow" />
                <div className="w-[65px] shrink-0 pl-2.5 text-sm leading-4 whitespace-nowrap">10 / 100</div>
              </div>
            </main>

            <aside className="ml-2.5 flex w-[218px] shrink-0 flex-col">
              <div className="pt-0.5"><DockTitle title="Navegador de la biblioteca" /></div>
              <div className="mt-[5px] flex h-[164px] shrink-0">
                <div className="my-px ml-0.5 flex grow flex-col overflow-hidden bg-white">
                  <div className={`h-[25px] shrink-0 pl-[3px] leading-[23px] ${RAISED}`}>Directoris</div>
                  <ul>
                    {DIRS.map(([name, kids]) => (
                      <li key={name}>
                        <button
                          type="button"
                          className={`flex h-[19px] w-full items-center pl-2 text-left leading-[19px] ${name === "domino" ? "bg-[#9b9a94] text-white" : ""}`}
                        >
                          <svg width="7" height="10" viewBox="0 0 7 10" fill="none" stroke="#000" className="shrink-0">
                            {kids && <path d="M1.500 1v8L5.500 5Z" />}
                          </svg>
                          <span className="mr-[7px] ml-[9px]"><Folder dark={name === "domino"} /></span>
                          {name}
                        </button>
                      </li>
                    ))}
                  </ul>
                </div>
                <ScrollBar before={0} thumb={70} after={66} dimStart className="mr-[3px] ml-[5px]" />
              </div>
              <div className="mt-[5px] mr-[3px] ml-0.5 flex h-[162px] shrink-0 flex-wrap content-start bg-white">
                {[0, 1, 2, 3, 4, 5, 6].map((n) => <Tile key={n} n={n} />)}
              </div>
              <button type="button" className={`mt-1 mr-0.5 h-7 shrink-0 ${RAISED}`}>Insereix</button>
              <div role="tablist" className="mt-0.5 -ml-px flex shrink-0 items-start border-t border-[#9b9a94]">
                <button role="tab" aria-selected="true" type="button" className={`h-7 w-[150px] truncate border-t-0 whitespace-nowrap ${RAISED}`}>Navegador de la …</button>
                <button role="tab" aria-selected="false" type="button" className="h-[25px] grow border-r border-b border-black bg-[#c3c2bc] whitespace-nowrap">Llista …</button>
              </div>
              <div className="mt-[9px]"><DockTitle title="Llista de blocs" /></div>
              <div className="mt-1 mr-1.5 flex justify-center gap-3">
                {BLOCK_ACTIONS_A.map((b) => (
                  <button key={b.label} type="button" aria-label={b.label} className={`flex h-[30px] w-7 items-center justify-center ${RAISED}`}>{b.icon}</button>
                ))}
              </div>
              <div className="mr-1.5 flex justify-center gap-5">
                {BLOCK_ACTIONS_B.map((b) => (
                  <button key={b.label} type="button" aria-label={b.label} className={`flex h-[30px] w-7 items-center justify-center ${RAISED}`}>{b.icon}</button>
                ))}
              </div>
              <div className="flex min-h-0 grow">
                <ul className="mt-0.5 mb-px ml-0.5 grow overflow-hidden bg-white">
                  {BLOCKS.map((b) => (
                    <li key={b}>
                      <button type="button" className="flex h-[25px] w-full items-center gap-[5px] pl-0.5 text-left"><Eye />{b}</button>
                    </li>
                  ))}
                </ul>
                <ScrollBar before={0} thumb={98} after={96} dimStart className="mr-[3px] ml-[5px]" />
              </div>
            </aside>
          </div>

          <section aria-label="Línia d'ordres" className="mt-2 flex h-[122px] shrink-0">
            <div className="flex w-[23px] shrink-0 flex-col items-center pt-1 pr-[3px]">
              <button type="button" aria-label="Tanca"><CloseGlyph /></button>
              <button type="button" aria-label="Desacobla" className="mt-[7px]"><FloatGlyph /></button>
              <h2 className="mt-1.5 rotate-180 leading-4 whitespace-nowrap [writing-mode:vertical-rl]">Línia d'or…</h2>
            </div>
            <div className="flex min-w-0 grow flex-col">
              <div className="flex h-[91px] shrink-0">
                <div role="log" className="mt-0.5 mb-px ml-0.5 grow bg-white pl-1 leading-[17px] whitespace-nowrap">
                  {LOG.map((l, i) => <div key={i}>{l}</div>)}
                </div>
                <ScrollBar before={19} thumb={43} after={0} dimEnd className="ml-[5px]" />
              </div>
              <div className="mt-px h-[3px] shrink-0 border-y border-t-[#9b9a94] border-b-white" />
              <div className="flex grow">
                <label htmlFor="command" className="w-[51px] leading-[27px]">Ordre:</label>
                <input id="command" type="text" className="min-w-0 grow bg-white px-1 outline-none" />
                <button type="button" className={`ml-1.5 w-[85px] ${RAISED}`}>Neteja</button>
              </div>
            </div>
          </section>
        </div>
      </div>

      <footer className="flex h-[35px] shrink-0 items-start gap-0.5 border-t border-black pt-px font-['Liberation_Sans',sans-serif]">
        <div className="flex border border-[#9b9a94]">
          <StatusCell lines={["161.8031 , 196.7247", "254.7172 < 51°"]} className="w-48 border-r border-[#9b9a94] pl-px" />
          <StatusCell lines={["161.8031 , 196.7247", "254.7172 < 51°"]} className="w-[190px] pl-px" />
        </div>
        <div className="flex h-[30px] w-[304px] items-center justify-center border border-[#9b9a94]">
          <svg width="18" height="24" viewBox="0 0 18 24" fill="none" stroke="#333" aria-hidden="true">
            <path d="M1 7q3 1 3-2t4-3q3 1 3 4" />
            <path d="M5.500 12V7q1-2 5.500-2t5.500 2v12q-1.500 4-5.500 4t-5.500-4Z" fill="#fff" />
            <path d="M5.500 12V7q1-2 3.500-2v6ZM16.500 12V7q-1-2-3-2v6Z" fill="#4fae0c" />
            <path d="M5.500 12h11" strokeWidth="1.500" />
          </svg>
        </div>
        <div className="flex border border-[#9b9a94]">
          <StatusCell lines={["Seleccionades", "0"]} className="w-[60px] pl-0.5" />
          <StatusCell lines={["Longitud total", "0"]} className="w-[63px] pl-0.5" />
        </div>
        <div className="flex border border-[#9b9a94]">
          <StatusCell lines={["Capa actual", "caixeti"]} className="w-[113px] pl-0.5" />
        </div>
        <div className="flex grow justify-end self-end pb-1">
          <svg width="14" height="14" viewBox="0 0 14 14" fill="none" stroke="#8f8e88" aria-hidden="true">
            <path d="M1 14 14 1M5 14l9-9M9 14l5-5" strokeWidth="1.500" />
            <path d="M2.500 14 14 2.500M6.500 14 14 6.500M10.500 14l3.500-3.500" stroke="#fff" />
          </svg>
        </div>
      </footer>
    </div>
  );
}
